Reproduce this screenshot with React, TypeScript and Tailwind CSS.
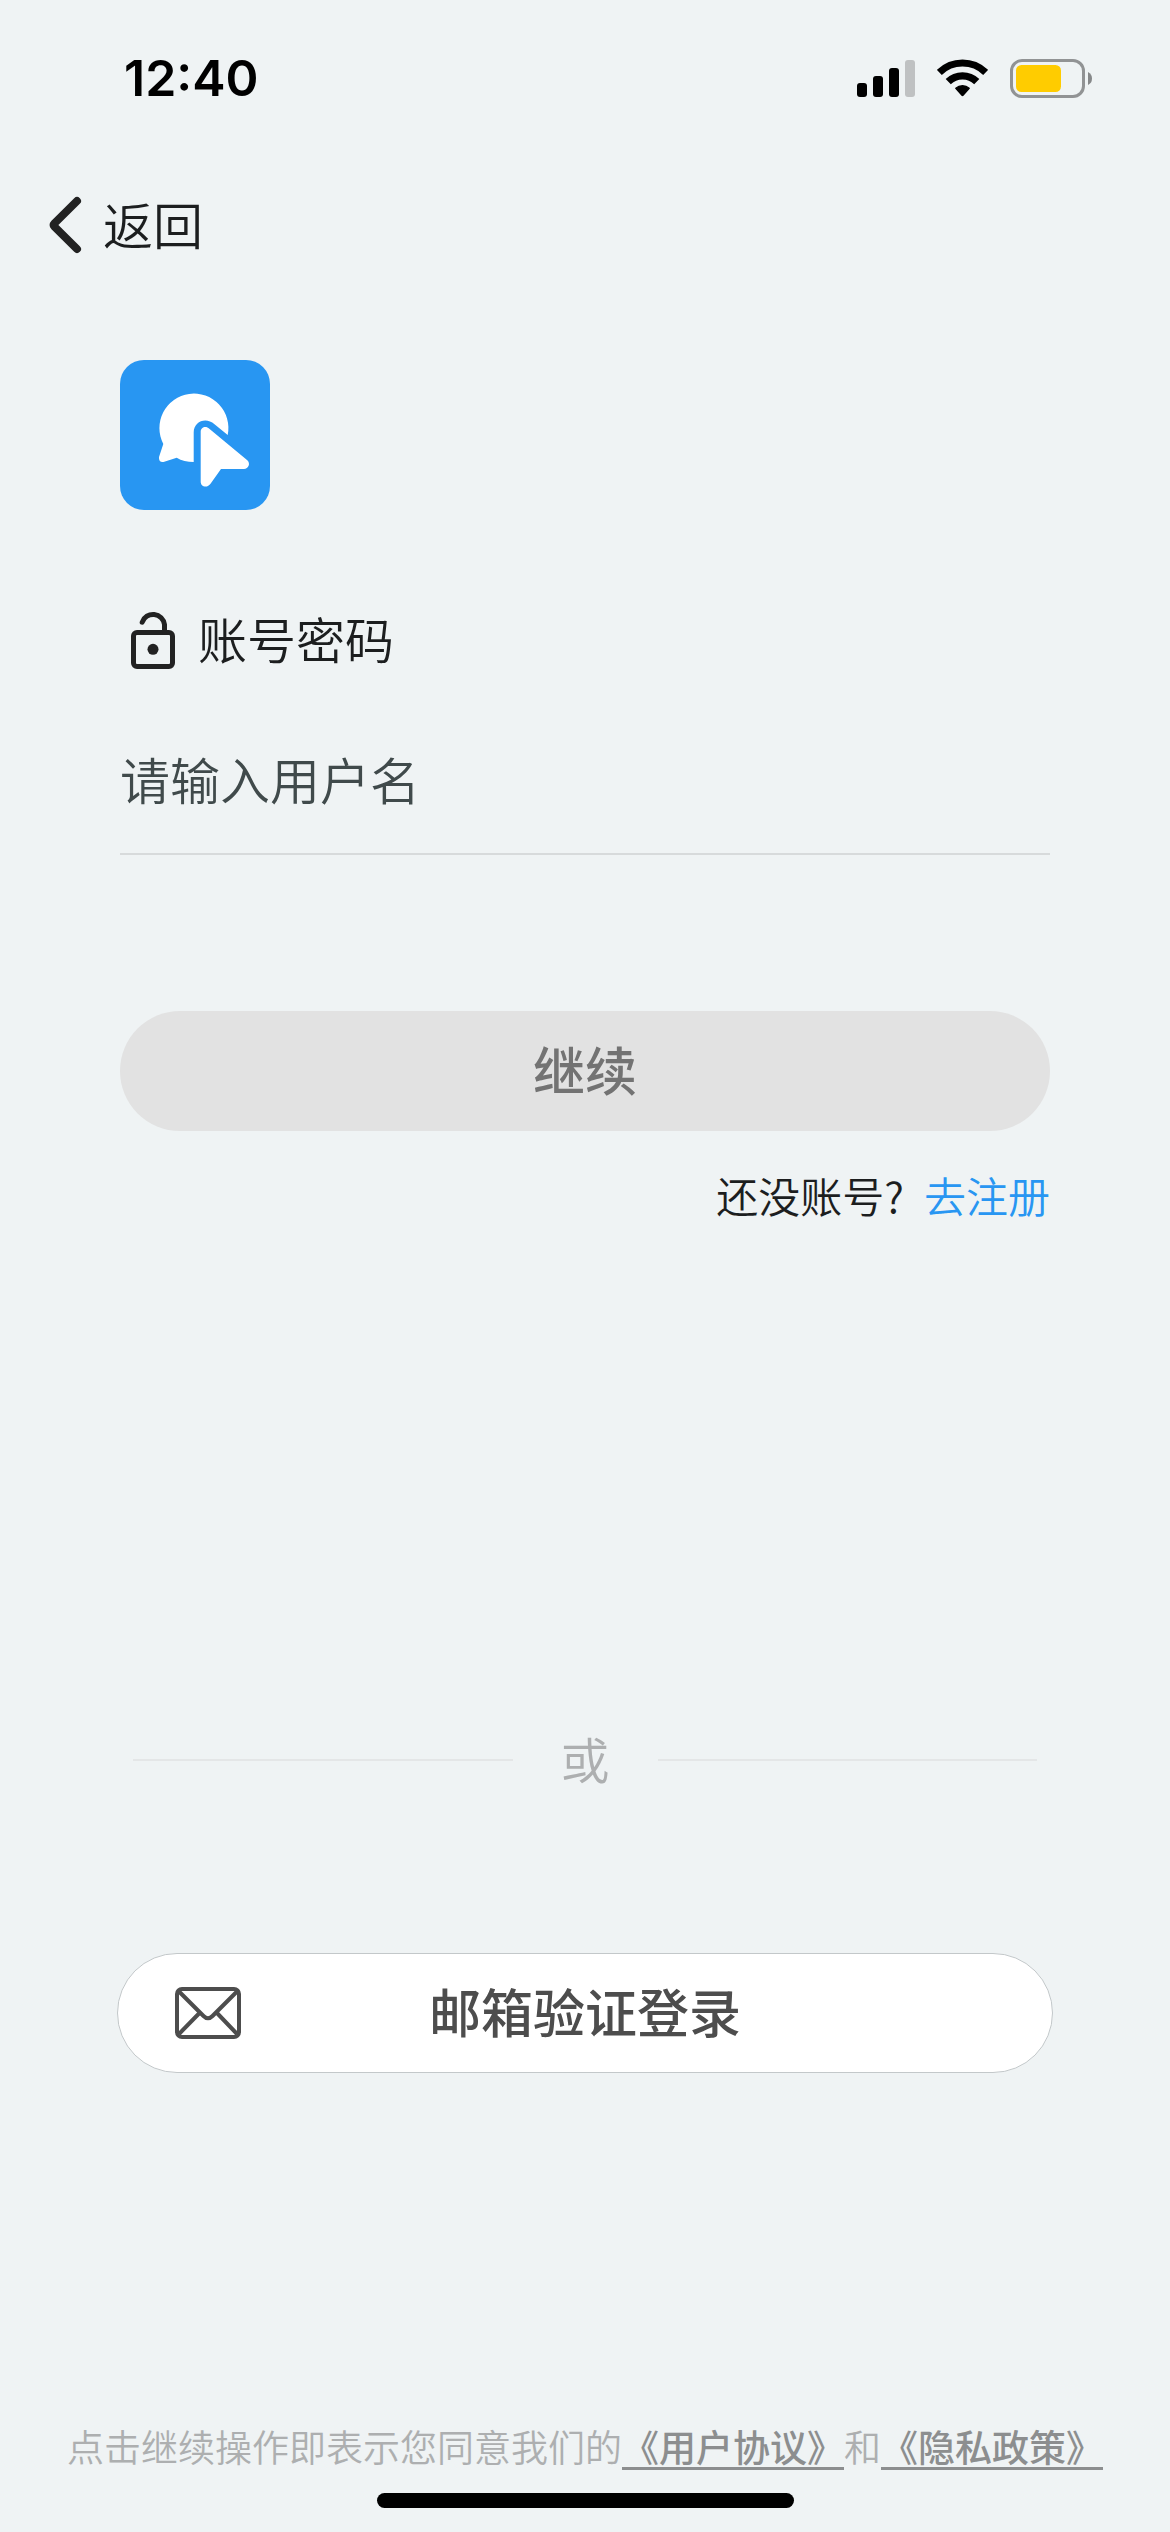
import React, { useState } from "react";

function SignalIcon() {
  return (
    <svg className="h-[37px] w-[58px]" viewBox="0 0 58 37" aria-hidden="true">
      <rect x="0" y="23" width="10" height="14" rx="3" />
      <rect x="16" y="16" width="10" height="21" rx="3" />
      <rect x="32" y="8" width="10" height="29" rx="3" />
      <rect x="48" y="0" width="10" height="37" rx="3" fill="#bfc1c2" />
    </svg>
  );
}

function WifiIcon() {
  return (
    <svg className="h-[38px] w-[51px]" viewBox="-76 -111 152 113" aria-hidden="true">
      <g fill="none" stroke="#000">
        <path d="M-69 -71 A99 99 0 0 1 69 -71" strokeWidth="21" />
        <path d="M-42.500 -43.500 A61 61 0 0 1 42.500 -43.500" strokeWidth="22" />
      </g>
      <path
        d="M-20 -24 A31 31 0 0 1 20 -24 L1.500 -3 Q0 -1.500 -1.500 -3 Z"
        stroke="#000"
        strokeWidth="4"
        strokeLinejoin="round"
      />
    </svg>
  );
}

function BatteryIcon() {
  return (
    <svg className="h-[39px] w-[82px]" viewBox="0 0 82 39" aria-hidden="true">
      <rect x="1.500" y="1.500" width="72" height="36" rx="10.500" fill="none" stroke="#919394" strokeWidth="3" />
      <rect x="6" y="6" width="45" height="27" rx="5.500" fill="#ffcc00" />
      <path d="M78 13 Q82 15 82 19.500 Q82 24 78 26 Z" fill="#868889" />
    </svg>
  );
}

function ChevronIcon() {
  return (
    <svg className="h-[58px] w-[34px]" viewBox="0 0 34 58" aria-hidden="true">
      <path
        d="M29 5 L6.300 27.500 Q4.800 29 6.300 30.500 L29 53"
        fill="none"
        stroke="#222"
        strokeWidth="8"
        strokeLinecap="round"
        strokeLinejoin="round"
      />
    </svg>
  );
}

function Logo() {
  return (
    <svg className="size-[150px] rounded-3xl bg-[#2896f2]" viewBox="0 0 150 150" role="img" aria-label="Logo">
      <g fill="#fff">
        <path d="M73.700 102 Q64 102 56.700 97.700 L43.500 101.900 Q38.500 102.500 39 97 L43.300 84 A34.500 34.500 0 1 1 107.700 75 L94.500 64.300 C86 56.500 73.700 61.500 73.700 72.500 Z" />
        <path d="M80.700 72 C80.700 67 86 65.500 89.300 68.700 L127.300 100.300 C130.800 103.500 128.500 109 124 109 L101 109 L90.700 123.500 C87.500 128.500 80.700 127 80.700 121.700 Z" />
      </g>
    </svg>
  );
}

function LockIcon() {
  return (
    <svg className="h-[60px] w-[46px]" viewBox="0 0 46 60" fill="none" stroke="#222" strokeWidth="5" aria-hidden="true">
      <rect x="3.500" y="22.500" width="39" height="34" rx="3.500" />
      <path d="M12.200 12.200 A11.500 11.500 0 0 1 34.500 14.500 V22" strokeLinecap="round" />
      <circle cx="23" cy="39.300" r="5.500" fill="#222" stroke="none" />
    </svg>
  );
}

function MailIcon() {
  return (
    <svg
      className="h-[52px] w-[66px]"
      viewBox="0 0 66 52"
      fill="none"
      stroke="#4d4d4d"
      strokeWidth="4"
      strokeLinejoin="round"
      aria-hidden="true"
    >
      <rect x="2" y="2" width="62" height="48" rx="5" />
      <path d="M4 4.500 L28.500 29 Q33 33.500 37.500 29 L62 4.500" />
      <path d="M24.500 26 L4 47 M42 26 L62 47" />
    </svg>
  );
}

export default function App() {
  const [username, setUsername] = useState("");

  return (
    <div className="flex min-h-screen flex-col bg-[#eff3f4] font-['Noto_Sans_CJK_SC',sans-serif] font-[350] text-[#1c1e1f]">
      <div className="flex h-[156px] items-center justify-between pr-[78px] pl-[124px] text-black">
        <time className="font-[Inter,sans-serif] text-[50px] leading-[60px] font-semibold">12:40</time>
        <div className="flex items-center gap-[22px]">
          <SignalIcon />
          <WifiIcon />
          <BatteryIcon />
        </div>
      </div>

      <header className="flex h-[138px] items-center pl-12">
        <button type="button" className="flex items-center gap-[21px] text-[50px] leading-[60px]">
          <ChevronIcon />
          <span className="pb-1">返回</span>
        </button>
      </header>

      <main className="flex flex-col px-[120px] pt-[66px]">
        <Logo />

        <form className="flex flex-col" onSubmit={(e) => e.preventDefault()}>
          <label htmlFor="username" className="mt-[94px] flex h-[72px] items-center gap-[22px] pl-[10px] text-[49px] leading-[60px]">
            <LockIcon />
            <span className="pb-1">账号密码</span>
          </label>
          <input
            id="username"
            type="text"
            value={username}
            onChange={(e) => setUsername(e.target.value)}
            placeholder="请输入用户名"
            className="mt-[30px] h-[149px] w-full border-b-2 border-[#d7dadb] bg-transparent pb-1 text-[50px] outline-none placeholder:text-[#404a4b]"
          />
          <button
            type="submit"
            disabled={!username}
            className="mt-[156px] h-[120px] rounded-full bg-[#e2e2e2] pb-1 text-[52px] leading-[60px] font-medium text-[#737373]"
          >
            继续
          </button>
        </form>

        <p className="mt-[34px] flex justify-end gap-5 text-[42px] leading-[60px]">
          <span>还没账号?</span>
          <a href="#register" className="text-[#2896f2]">去注册</a>
        </p>

        <div className="mt-[503px] flex items-center gap-12 px-[13px] text-[49px] leading-[60px] text-[#adafb0]">
          <span className="h-[2px] flex-1 bg-[#e4e6e7]" />
          <span className="pb-1">或</span>
          <span className="h-[2px] flex-1 bg-[#e4e6e7]" />
        </div>

        <button
          type="button"
          className="-mx-[3px] mt-[161px] grid h-[120px] grid-cols-[1fr_auto_1fr] items-center rounded-full border border-[#c3c8ca] bg-white px-[57px] text-[52px] leading-[60px] font-medium text-[#4d4d4d]"
        >
          <MailIcon />
          <span className="pb-1">邮箱验证登录</span>
        </button>
      </main>

      <footer className="mt-auto flex flex-col items-center pb-6">
        <p className="text-center text-[37px] leading-[54px] text-[#adafb0]">
          点击继续操作即表示您同意我们的
          <a href="#terms" className="font-medium text-[#8c8e8f] underline decoration-[3px] underline-offset-[5px]">《用户协议》</a>
          和
          <a href="#privacy" className="font-medium text-[#8c8e8f] underline decoration-[3px] underline-offset-[5px]">《隐私政策》</a>
        </p>
        <div className="mt-5 h-[15px] w-[417px] rounded-full bg-black" />
      </footer>
    </div>
  );
}
